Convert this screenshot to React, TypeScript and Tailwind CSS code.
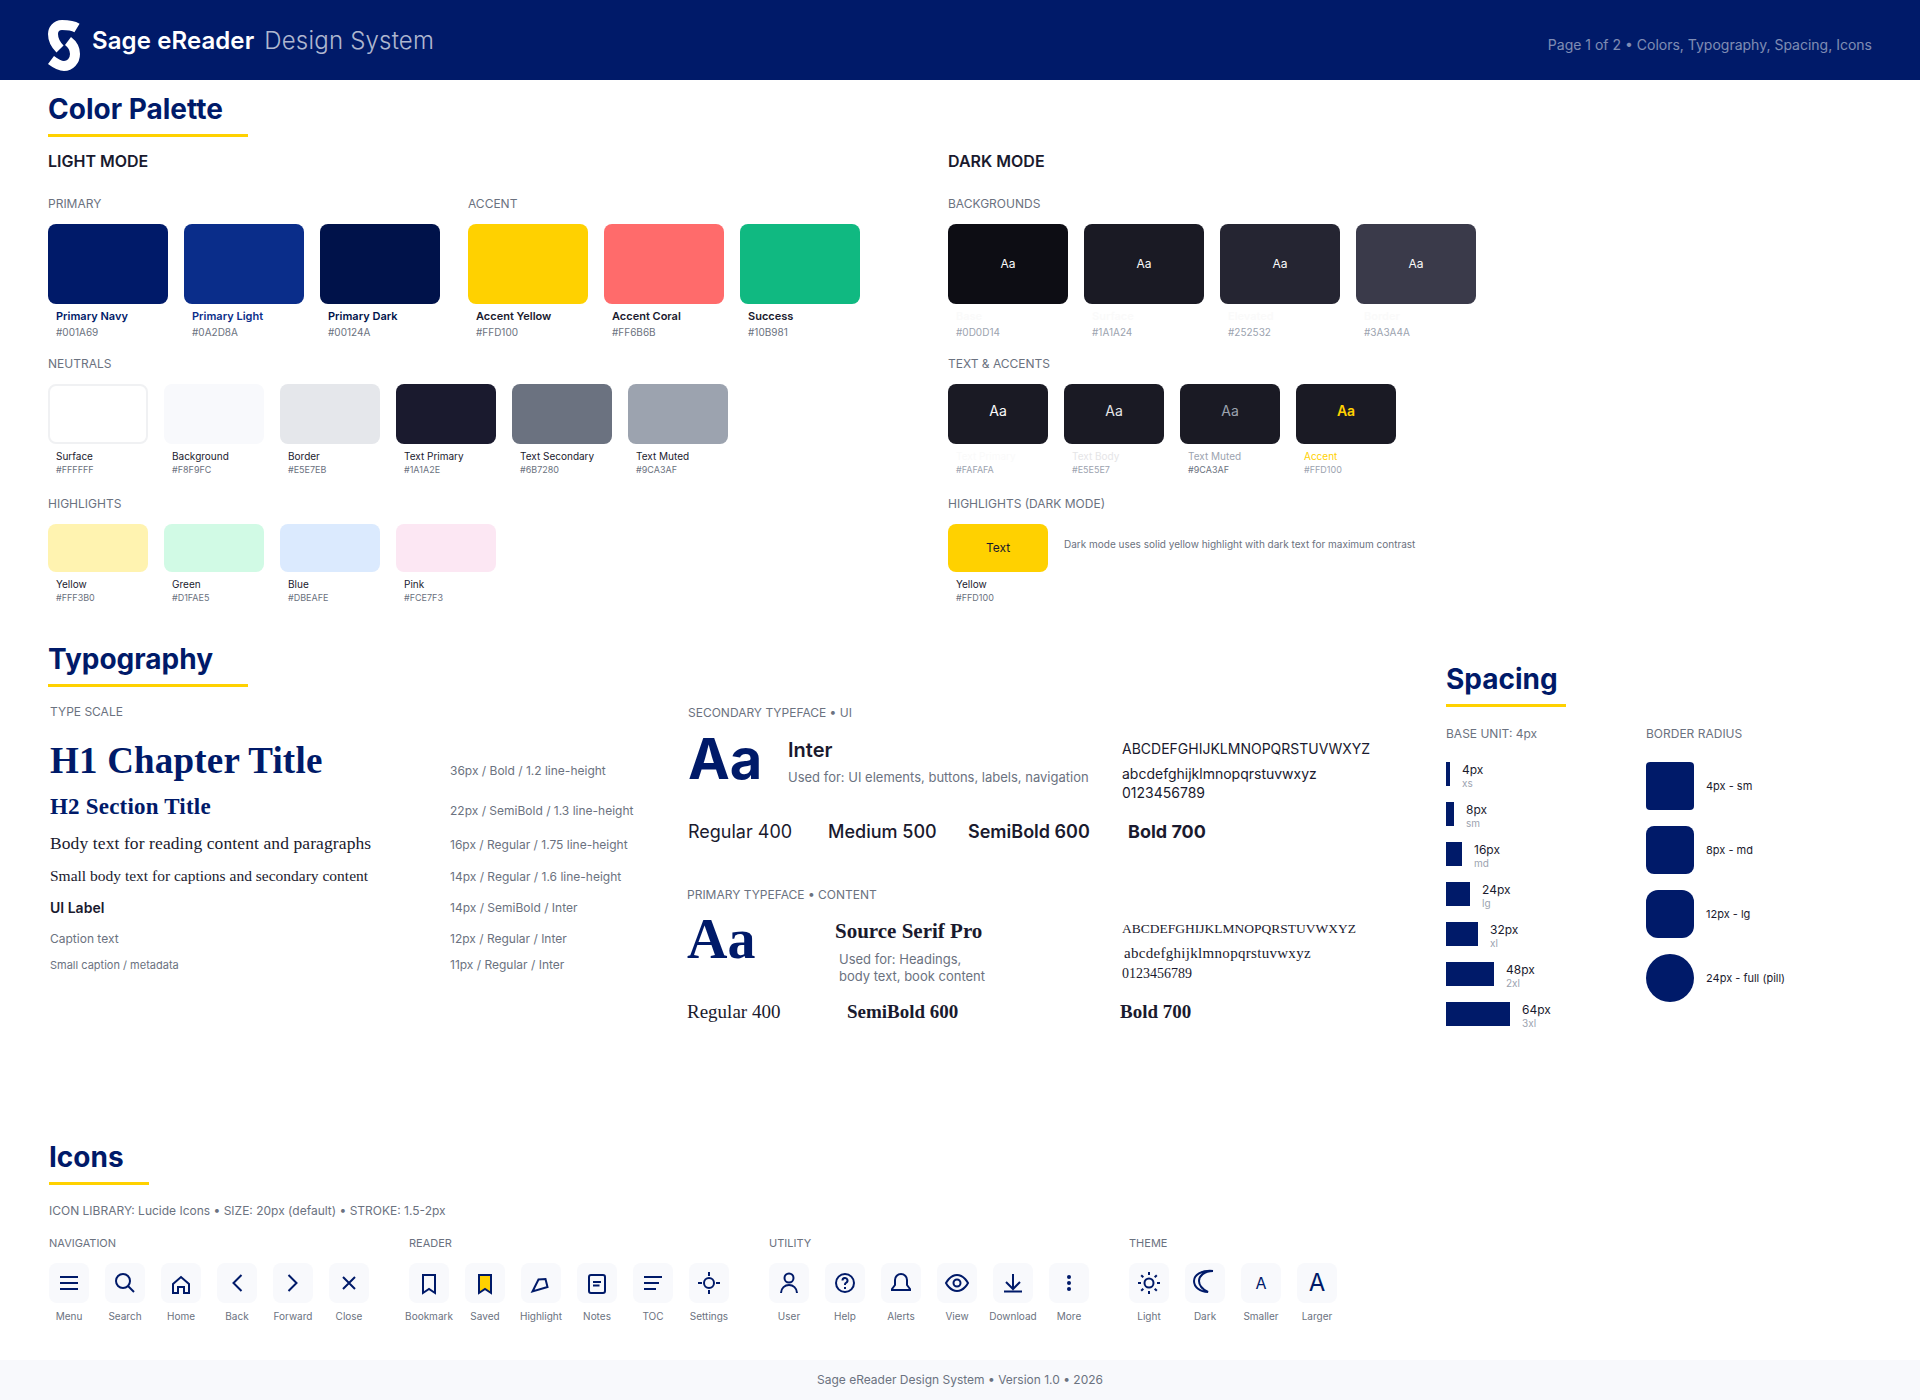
import React from "react"

const serif = "[font-family:'Liberation_Serif',serif]"

function Title({ text, width, className = "" }: { text: string; width: string; className?: string }) {
	return (
		<div className={`${width} ${className} border-b-[3px] border-[#FFD100] pb-2 text-[28px] leading-[34px] font-bold text-[#001A69] whitespace-nowrap`}>
			{text}
		</div>
	)
}

function Group({ children, className = "" }: { children: React.ReactNode; className?: string }) {
	return <div className={`text-xs leading-4 text-[#6B7280] ${className}`}>{children}</div>
}

function Big({ bg, name, hex, nameColor, hexColor = "text-[#6B7280]", aa }: { bg: string; name: string; hex: string; nameColor: string; hexColor?: string; aa?: boolean }) {
	return (
		<div className="w-[120px]">
			<div className={`${bg} h-20 rounded-lg flex items-center justify-center text-xs text-[#FAFAFA]`}>{aa ? "Aa" : null}</div>
			<div className={`mt-1 px-2 text-[11px] leading-4 font-semibold ${nameColor}`}>{name}</div>
			<div className={`px-2 text-[10px] leading-4 ${hexColor}`}>{hex}</div>
		</div>
	)
}

function Small({ bg, h = "h-[60px]", name, hex, box = "", nameColor = "text-[#1A1A2E]", hexColor = "text-[#6B7280]", children }: { bg: string; h?: string; name: string; hex: string; box?: string; nameColor?: string; hexColor?: string; children?: React.ReactNode }) {
	return (
		<div className="w-[100px]">
			<div className={`${bg} ${h} ${box} rounded-lg flex items-center justify-center`}>{children}</div>
			<div className={`mt-1 px-2 text-[10px] leading-4 ${nameColor}`}>{name}</div>
			<div className={`px-2 text-[9px] leading-3 ${hexColor}`}>{hex}</div>
		</div>
	)
}

function ScaleRow({ className, sampleClass, sample, label, labelClass }: { className: string; sampleClass: string; sample: string; label: string; labelClass: string }) {
	return (
		<div className={`flex items-end ${className}`}>
			<div className={`w-[400px] whitespace-nowrap ${sampleClass}`}>{sample}</div>
			<div className={`text-xs leading-4 text-[#6B7280] ${labelClass}`}>{label}</div>
		</div>
	)
}

function Bar({ w, size, name }: { w: string; size: string; name: string }) {
	return (
		<div className="flex gap-3 h-6">
			<div className={`${w} h-6 bg-[#001A69]`}></div>
			<div>
				<div className="text-xs leading-[15px] text-[#1A1A2E]">{size}</div>
				<div className="text-[10px] leading-3 text-[#9CA3AF]">{name}</div>
			</div>
		</div>
	)
}

function Radius({ r, label }: { r: string; label: string }) {
	return (
		<div className="flex items-center gap-3">
			<div className={`w-12 h-12 bg-[#001A69] ${r}`}></div>
			<div className="text-[11px] text-[#1A1A2E]">{label}</div>
		</div>
	)
}

function Ico({ children }: { children: React.ReactNode }) {
	return (
		<svg width="24" height="24" viewBox="0 0 24 24" fill="none" stroke="#001A69" strokeWidth="2" className="overflow-visible">
			{children}
		</svg>
	)
}

function Tile({ label, children }: { label: string; children: React.ReactNode }) {
	return (
		<div className="w-10 flex flex-col items-center">
			<div className="w-10 h-10 rounded-lg bg-[#F8F9FC] flex items-center justify-center">{children}</div>
			<div className="mt-1.5 text-[10px] leading-[14px] text-[#6B7280] whitespace-nowrap">{label}</div>
		</div>
	)
}

function IconGroup({ title, children }: { title: string; children: React.ReactNode }) {
	return (
		<div>
			<div className="text-[11px] leading-4 text-[#6B7280] mb-3">{title}</div>
			<div className="flex gap-4">{children}</div>
		</div>
	)
}

export default function App() {
	return (
		<div className="w-[1920px] min-h-[1400px] flex flex-col bg-white [font-family:Inter,sans-serif]">
			<div className="h-20 bg-[#001A69] px-12 flex items-center justify-between">
				<div className="flex items-center">
					<svg width="32" height="51" viewBox="0 0 32 51" fill="none" stroke="#FFFFFF" strokeWidth="10" className="mt-[10px]">
						<path d="M29 8 C24 5 19 5 14 5 C8 5 5 10 5 14 C5 20 8 25 12 29" />
						<path d="M20 21 C24 24 27 28 27 34 C27 41 22 46 16 46 C11 46 7 43 3 40" />
					</svg>
					<div className="ml-3 mt-[2px] text-2xl tracking-[0.1px] font-semibold text-white">Sage eReader</div>
					<div className="ml-[10px] mt-[2px] text-2xl tracking-[0.2px] font-light text-white/70">Design System</div>
				</div>
				<div className="mt-[10px] text-sm text-white/50">Page 1 of 2 • Colors, Typography, Spacing, Icons</div>
			</div>

			<div className="px-12 pt-3 pb-[2px]">
				<Title text="Color Palette" width="w-[200px]" />
				<div className="flex">
					<div className="w-[900px]">
						<div className="mt-3 text-base leading-6 font-semibold text-[#1A1A2E]">LIGHT MODE</div>
						<div className="flex gap-7 mt-[23px]">
							<div>
								<Group className="mb-3">PRIMARY</Group>
								<div className="flex gap-4">
									<Big bg="bg-[#001A69]" name="Primary Navy" hex="#001A69" nameColor="text-[#001A69]" />
									<Big bg="bg-[#0A2D8A]" name="Primary Light" hex="#0A2D8A" nameColor="text-[#0A2D8A]" />
									<Big bg="bg-[#00124A]" name="Primary Dark" hex="#00124A" nameColor="text-[#00124A]" />
								</div>
							</div>
							<div>
								<Group className="mb-3">ACCENT</Group>
								<div className="flex gap-4">
									<Big bg="bg-[#FFD100]" name="Accent Yellow" hex="#FFD100" nameColor="text-[#1A1A2E]" />
									<Big bg="bg-[#FF6B6B]" name="Accent Coral" hex="#FF6B6B" nameColor="text-[#1A1A2E]" />
									<Big bg="bg-[#10B981]" name="Success" hex="#10B981" nameColor="text-[#1A1A2E]" />
								</div>
							</div>
						</div>
						<Group className="mt-4 mb-3">NEUTRALS</Group>
						<div className="flex gap-4">
							<Small bg="bg-white" box="border-2 border-[#F0F1F3]" name="Surface" hex="#FFFFFF" />
							<Small bg="bg-[#F8F9FC]" name="Background" hex="#F8F9FC" />
							<Small bg="bg-[#E5E7EB]" name="Border" hex="#E5E7EB" />
							<Small bg="bg-[#1A1A2E]" name="Text Primary" hex="#1A1A2E" />
							<Small bg="bg-[#6B7280]" name="Text Secondary" hex="#6B7280" />
							<Small bg="bg-[#9CA3AF]" name="Text Muted" hex="#9CA3AF" />
						</div>
						<Group className="mt-5 mb-3">HIGHLIGHTS</Group>
						<div className="flex gap-4">
							<Small bg="bg-[#FFF3B0]" h="h-12" name="Yellow" hex="#FFF3B0" />
							<Small bg="bg-[#D1FAE5]" h="h-12" name="Green" hex="#D1FAE5" />
							<Small bg="bg-[#DBEAFE]" h="h-12" name="Blue" hex="#DBEAFE" />
							<Small bg="bg-[#FCE7F3]" h="h-12" name="Pink" hex="#FCE7F3" />
						</div>
					</div>

					<div>
						<div className="mt-3 text-base leading-6 font-semibold text-[#1A1A2E]">DARK MODE</div>
						<Group className="mt-[23px] mb-3">BACKGROUNDS</Group>
						<div className="flex gap-4">
							<Big aa bg="bg-[#0D0D14]" name="Base" hex="#0D0D14" nameColor="text-[#FAFAFA] font-normal" hexColor="text-[#9CA3AF]" />
							<Big aa bg="bg-[#1A1A24]" name="Surface" hex="#1A1A24" nameColor="text-[#FAFAFA] font-normal" hexColor="text-[#9CA3AF]" />
							<Big aa bg="bg-[#252532]" name="Elevated" hex="#252532" nameColor="text-[#FAFAFA] font-normal" hexColor="text-[#9CA3AF]" />
							<Big aa bg="bg-[#3A3A4A]" name="Border" hex="#3A3A4A" nameColor="text-[#FAFAFA] font-normal" hexColor="text-[#9CA3AF]" />
						</div>
						<Group className="mt-4 mb-3">TEXT &amp; ACCENTS</Group>
						<div className="flex gap-4">
							<Small bg="bg-[#1A1A24]" name="Text Primary" hex="#FAFAFA" nameColor="text-[#FAFAFA]" hexColor="text-[#9CA3AF]">
								<span className="mb-[6px] text-sm text-[#FAFAFA]">Aa</span>
							</Small>
							<Small bg="bg-[#1A1A24]" name="Text Body" hex="#E5E5E7" nameColor="text-[#E5E5E7]" hexColor="text-[#9CA3AF]">
								<span className="mb-[6px] text-sm text-[#E5E5E7]">Aa</span>
							</Small>
							<Small bg="bg-[#1A1A24]" name="Text Muted" hex="#9CA3AF" nameColor="text-[#9CA3AF]" hexColor="text-[#6B7280]">
								<span className="mb-[6px] text-sm text-[#9CA3AF]">Aa</span>
							</Small>
							<Small bg="bg-[#1A1A24]" name="Accent" hex="#FFD100" nameColor="text-[#FFD100]" hexColor="text-[#9CA3AF]">
								<span className="mb-[6px] text-sm font-semibold text-[#FFD100]">Aa</span>
							</Small>
						</div>
						<Group className="mt-5 mb-3">HIGHLIGHTS (DARK MODE)</Group>
						<div className="flex gap-4">
							<Small bg="bg-[#FFD100]" h="h-12" name="Yellow" hex="#FFD100">
								<span className="text-xs text-[#1A1A2E]">Text</span>
							</Small>
							<div className="mt-[12px] text-[10px] leading-4 text-[#6B7280]">Dark mode uses solid yellow highlight with dark text for maximum contrast</div>
						</div>
					</div>
				</div>
			</div>

			<div className="px-12 flex items-start">
				<div className="w-[640px] mt-9">
					<Title text="Typography" width="w-[200px]" />
					<div className="pl-[2px]">
						<Group className="mt-[17px]">TYPE SCALE</Group>
						<ScaleRow className="mt-[19px]" sampleClass={`${serif} text-[37px] tracking-[0.2px] leading-[43px] font-bold text-[#001A69]`} sample="H1 Chapter Title" label="36px / Bold / 1.2 line-height" labelClass="mb-[3px]" />
						<ScaleRow className="mt-[10px]" sampleClass={`${serif} pb-[2px] text-[23px] tracking-[0.2px] leading-[29px] font-bold text-[#001A69]`} sample="H2 Section Title" label="22px / SemiBold / 1.3 line-height" labelClass="mb-1" />
						<ScaleRow className="mt-[6px]" sampleClass={`${serif} text-[17.5px] tracking-[0.1px] leading-7 text-[#1A1A2E]`} sample="Body text for reading content and paragraphs" label="16px / Regular / 1.75 line-height" labelClass="mb-1" />
						<ScaleRow className="mt-2" sampleClass={`${serif} text-[15.5px] leading-[22px] text-[#1A1A2E]`} sample="Small body text for captions and secondary content" label="14px / Regular / 1.6 line-height" labelClass="mb-[2px]" />
						<ScaleRow className="mt-[11px]" sampleClass="text-sm leading-5 font-semibold text-[#1A1A2E]" sample="UI Label" label="14px / SemiBold / Inter" labelClass="mb-[2px]" />
						<ScaleRow className="mt-[13px]" sampleClass="text-xs leading-4 text-[#6B7280]" sample="Caption text" label="12px / Regular / Inter" labelClass="" />
						<ScaleRow className="mt-[10px]" sampleClass="text-[11px] leading-4 text-[#6B7280]" sample="Small caption / metadata" label="11px / Regular / Inter" labelClass="" />
					</div>
				</div>

				<div className="w-[758px] mt-[99px]">
					<Group>SECONDARY TYPEFACE • UI</Group>
					<div className="flex items-start mt-[6px]">
						<div className="w-[100px] text-[56px] leading-[64px] font-bold text-[#001A69]">Aa</div>
						<div className="w-[334px] mt-[11px]">
							<div className="text-xl leading-6 font-semibold text-[#1A1A2E]">Inter</div>
							<div className="mt-[5px] text-[13px] leading-5 text-[#6B7280]">Used for: UI elements, buttons, labels, navigation</div>
						</div>
						<div className="mt-3 text-[#1A1A2E] text-sm">
							<div className="leading-5">ABCDEFGHIJKLMNOPQRSTUVWXYZ</div>
							<div className="mt-[5px] leading-[19px]">abcdefghijklmnopqrstuvwxyz</div>
							<div className="leading-[19px]">0123456789</div>
						</div>
					</div>
					<div className="flex mt-[18px] text-lg leading-6 text-[#1A1A2E]">
						<div className="w-[140px]">Regular 400</div>
						<div className="w-[140px] font-medium">Medium 500</div>
						<div className="w-[160px] font-semibold">SemiBold 600</div>
						<div className="font-bold">Bold 700</div>
					</div>

					<Group className="mt-[43px] -ml-px">PRIMARY TYPEFACE • CONTENT</Group>
					<div className={`flex items-start -ml-px mt-[4px] ${serif}`}>
						<div className="w-[148px] text-[56px] leading-[64px] font-bold text-[#001A69]">Aa</div>
						<div className="w-[287px] mt-3">
							<div className="text-[21px] leading-6 font-bold text-[#1A1A2E]">Source Serif Pro</div>
							<div className="mt-2 ml-1 text-[13px] leading-[17px] text-[#6B7280] [font-family:Inter,sans-serif]">
								Used for: Headings,
								<br />
								body text, book content
							</div>
						</div>
						<div className="mt-3 text-sm text-[#1A1A2E]">
							<div className="text-[13.5px] leading-5">ABCDEFGHIJKLMNOPQRSTUVWXYZ</div>
							<div className="mt-1 ml-0.5 text-[15px] tracking-[0.3px] leading-5">abcdefghijklmnopqrstuvwxyz</div>
							<div className="mt-px leading-5">0123456789</div>
						</div>
					</div>
					<div className={`flex -ml-px mt-[15px] text-[19px] leading-6 text-[#1A1A2E] ${serif}`}>
						<div className="w-[160px]">Regular 400</div>
						<div className="w-[273px] font-bold">SemiBold 600</div>
						<div className="font-bold">Bold 700</div>
					</div>
				</div>

				<div className="mt-14">
					<Title text="Spacing" width="w-[120px]" />
					<div className="flex mt-[19px]">
						<div className="w-[200px]">
							<Group className="mb-5">BASE UNIT: 4px</Group>
							<div className="flex flex-col gap-4">
								<Bar w="w-1" size="4px" name="xs" />
								<Bar w="w-2" size="8px" name="sm" />
								<Bar w="w-4" size="16px" name="md" />
								<Bar w="w-6" size="24px" name="lg" />
								<Bar w="w-8" size="32px" name="xl" />
								<Bar w="w-12" size="48px" name="2xl" />
								<Bar w="w-16" size="64px" name="3xl" />
							</div>
						</div>
						<div>
							<Group className="mb-5">BORDER RADIUS</Group>
							<div className="flex flex-col gap-4">
								<Radius r="rounded" label="4px - sm" />
								<Radius r="rounded-lg" label="8px - md" />
								<Radius r="rounded-xl" label="12px - lg" />
								<Radius r="rounded-3xl" label="24px - full (pill)" />
							</div>
						</div>
					</div>
				</div>
			</div>

			<div className="pl-[49px] mt-[114px]">
				<Title text="Icons" width="w-[100px]" />
				<div className="mt-[18px] text-xs leading-4 text-[#6B7280]">ICON LIBRARY: Lucide Icons • SIZE: 20px (default) • STROKE: 1.5-2px</div>
				<div className="flex gap-10 mt-4">
					<IconGroup title="NAVIGATION">
						<Tile label="Menu">
							<Ico><path d="M3 6h18M3 12h18M3 18h18" /></Ico>
						</Tile>
						<Tile label="Search">
							<Ico><circle cx="10" cy="10" r="7" /><path d="M15 15l6 6" /></Ico>
						</Tile>
						<Tile label="Home">
							<Ico><path d="M4 13l8-7 8 7v9h-5v-6H9v6H4z" /></Ico>
						</Tile>
						<Tile label="Back">
							<Ico><path d="M16.5 4l-8 8 8 8" /></Ico>
						</Tile>
						<Tile label="Forward">
							<Ico><path d="M7.5 4l8 8-8 8" /></Ico>
						</Tile>
						<Tile label="Close">
							<Ico><path d="M6 6l12 12M18 6L6 18" /></Ico>
						</Tile>
					</IconGroup>
					<IconGroup title="READER">
						<Tile label="Bookmark">
							<Ico><path d="M6 4h12v18l-6-4-6 4z" /></Ico>
						</Tile>
						<Tile label="Saved">
							<Ico><path d="M6 4h12v18l-6-4-6 4z" fill="#FFD100" /></Ico>
						</Tile>
						<Tile label="Highlight">
							<Ico><path d="M3.5 20.5l6-12 7-.5 2 8z" /></Ico>
						</Tile>
						<Tile label="Notes">
							<Ico><rect x="4" y="4" width="16" height="18" rx="2" /><path d="M8 11h8M8 14.5h6.5" /></Ico>
						</Tile>
						<Tile label="TOC">
							<Ico><path d="M3 6h18M3 12h15M3 18h12" /></Ico>
						</Tile>
						<Tile label="Settings">
							<Ico><circle cx="12" cy="12" r="5" /><path d="M12 1v4M12 19v4M1 12h4M19 12h4" /></Ico>
						</Tile>
					</IconGroup>
					<IconGroup title="UTILITY">
						<Tile label="User">
							<Ico><circle cx="12" cy="7" r="4.5" /><path d="M4 22c0-5 4-8 8-8s8 3 8 8" /></Ico>
						</Tile>
						<Tile label="Help">
							<Ico><circle cx="12" cy="12" r="9" /><path d="M9.5 9.5a2.5 2.5 0 1 1 3.5 2.3c-.7.4-1 1-1 1.7v.5M12 16v2" /></Ico>
						</Tile>
						<Tile label="Alerts">
							<Ico><path d="M6 9a6 6 0 0 1 12 0v5l3 4v1H3v-1l3-4z" /></Ico>
						</Tile>
						<Tile label="View">
							<Ico><path d="M1 12s4-8 11-8 11 8 11 8-4 8-11 8-11-8-11-8z" /><circle cx="12" cy="12" r="3.5" /></Ico>
						</Tile>
						<Tile label="Download">
							<Ico><path d="M12 3v15M5 11l7 7 7-7M3 20.5h18" /></Ico>
						</Tile>
						<Tile label="More">
							<Ico>
								<circle cx="12" cy="6" r="2" fill="#001A69" stroke="none" />
								<circle cx="12" cy="12" r="2" fill="#001A69" stroke="none" />
								<circle cx="12" cy="18" r="2" fill="#001A69" stroke="none" />
							</Ico>
						</Tile>
					</IconGroup>
					<IconGroup title="THEME">
						<Tile label="Light">
							<Ico><circle cx="12" cy="12" r="4.5" /><path d="M12 1v3M12 20v3M1 12h3M20 12h3M4.2 4.2l2.1 2.1M17.7 17.7l2.1 2.1M4.2 19.8l2.1-2.1M17.7 6.3l2.1-2.1" /></Ico>
						</Tile>
						<Tile label="Dark">
							<Ico><path d="M20 0C8-1 1 4 1 10c0 6 6 11 14 11-6-3-9-7-9-11 0-5 5-10 14-10z" /></Ico>
						</Tile>
						<Tile label="Smaller">
							<span className="text-base leading-6 text-[#001A69]">A</span>
						</Tile>
						<Tile label="Larger">
							<span className="text-2xl leading-6 text-[#001A69]">A</span>
						</Tile>
					</IconGroup>
				</div>
			</div>

			<div className="mt-auto h-10 bg-[#F8F9FC] flex items-center justify-center text-xs text-[#6B7280]">
				Sage eReader Design System • Version 1.0 • 2026
			</div>
		</div>
	)
}
